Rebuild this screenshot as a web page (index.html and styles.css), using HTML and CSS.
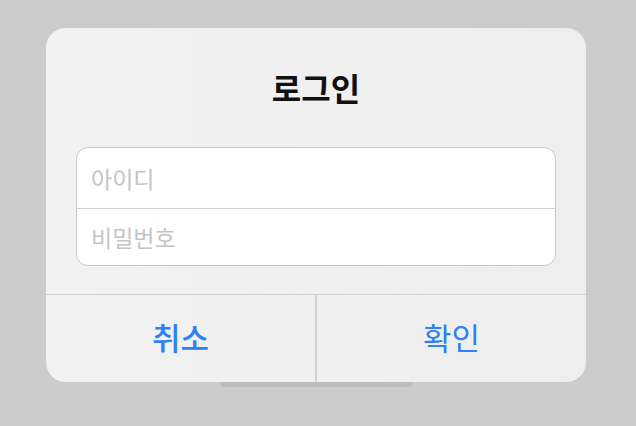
FILE: index.html
```html
<!DOCTYPE html>
<html lang="ko">
<head>
<meta charset="utf-8">
<link rel="stylesheet" href="styles.css">
</head>
<body>
<div class="stage">
  <div class="dialog">
    <h1 class="title">로그인</h1>
    <div class="fields">
      <div class="field field-first">아이디</div>
      <div class="field">비밀번호</div>
    </div>
    <div class="actions">
      <div class="btn btn-cancel">취소</div>
      <div class="btn btn-ok">확인</div>
    </div>
  </div>
  <div class="under"></div>
</div>
</body>
</html>
```
FILE: styles.css
```css
html, body {
  margin: 0;
  padding: 0;
  background: #cccccc;
  width: 636px;
  height: 426px;
  overflow: hidden;
  font-family: "Noto Sans CJK KR", "Noto Sans", sans-serif;
}
.stage {
  padding: 28px 0 0 46px;
  display: flex;
  flex-direction: column;
}
.dialog {
  width: 540px;
  height: 354px;
  box-sizing: border-box;
  border-radius: 20px;
  background: linear-gradient(90deg, #f2f2f2, #eeeeee);
  display: flex;
  flex-direction: column;
  overflow: hidden;
}
.title {
  margin: 0;
  padding-top: 38px;
  height: 42px;
  line-height: 42px;
  font-size: 32px;
  font-weight: 700;
  color: #111;
  text-align: center;
}
.fields {
  margin: 39px 30px 0 30px;
  height: 119px;
  box-sizing: border-box;
  border: 1px solid #c8c8c8;
  border-radius: 12px;
  background: #ffffff;
  display: flex;
  flex-direction: column;
}
.field {
  flex: 1;
  display: flex;
  align-items: center;
  padding-left: 14px;
  font-size: 23px;
  color: #c4c4c4;
}
.field-first {
  flex: 0 0 60px;
}
.field + .field {
  border-top: 1px solid #cfcfcf;
}
.actions {
  margin-top: 28px;
  flex: 1;
  border-top: 1px solid #d2d2d2;
  display: flex;
}
.btn {
  flex: 0 0 auto;
  display: flex;
  align-items: center;
  justify-content: center;
  font-size: 31px;
  color: #2f80f6;
  padding-bottom: 5px;
}
.btn-cancel {
  width: 269px;
  border-right: 2px solid #d2d2d2;
  font-weight: 500;
}
.btn-ok {
  flex: 1;
  font-weight: 400;
}
.under {
  margin-left: 174px;
  width: 193px;
  height: 5px;
  background: #bdbdbd;
  border-radius: 0 0 10px 10px;
}
```
